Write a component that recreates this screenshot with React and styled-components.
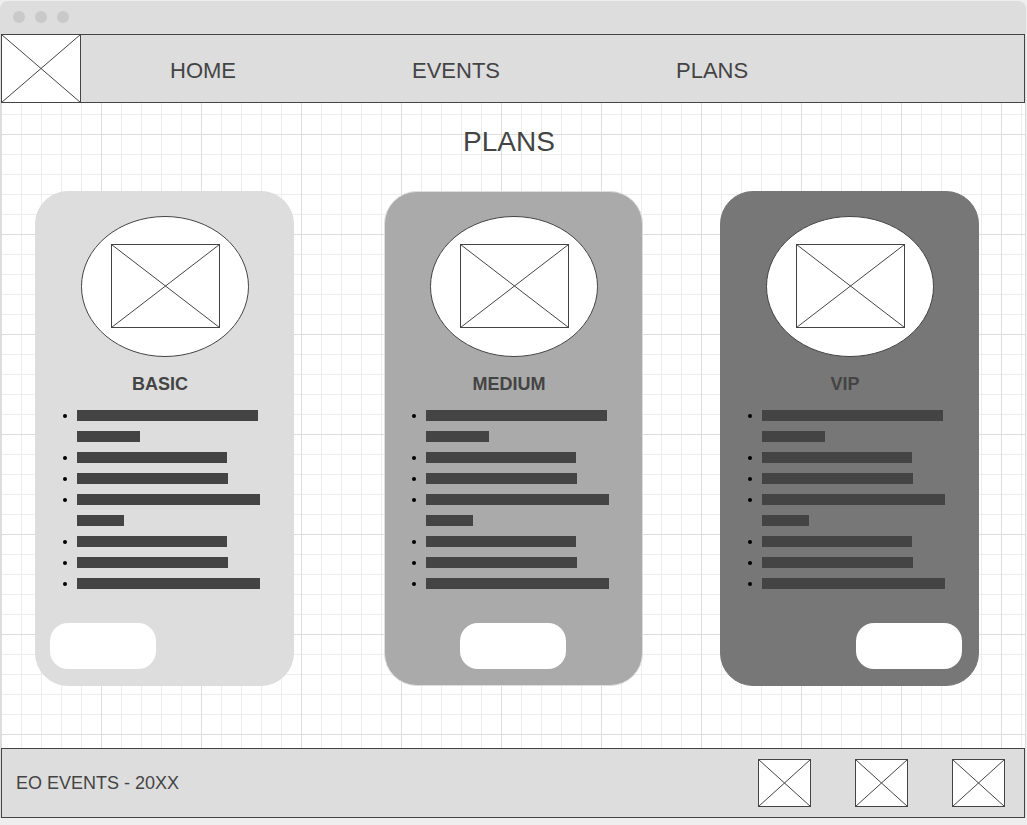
import React from "react";
import styled, { createGlobalStyle } from "styled-components";

const ink = "#444";
const panel = "#ddd";

const GlobalStyle = createGlobalStyle`
  *, *::before, *::after { box-sizing: border-box; }
  body {
    margin: 0;
    background: #eee;
    color: ${ink};
    font-family: "Liberation Sans", Arial, sans-serif;
  }
`;

const Window = styled.div`
  margin: 1px 1px 0 0;
  border: solid ${panel};
  border-width: 0 1px;
  border-radius: 8px 8px 0 0;
  background: ${panel};
`;

const TitleBar = styled.div`
  display: flex;
  gap: 10px;
  height: 33px;
  padding: 10px 12px;
`;

const Dot = styled.span`
  width: 12px;
  height: 12px;
  border-radius: 50%;
  background: #c9c9c9;
`;

const Canvas = styled.div`
  background-color: #fff;
  background-image:
    linear-gradient(${panel} 1px, transparent 1px),
    linear-gradient(90deg, ${panel} 1px, transparent 1px),
    linear-gradient(#ededed 1px, transparent 1px),
    linear-gradient(90deg, #ededed 1px, transparent 1px);
  background-size: 100px 100px, 100px 100px, 20px 20px, 20px 20px;
`;

const Header = styled.header`
  display: flex;
  align-items: center;
  background: ${panel};
  outline: 1px solid ${ink};
  outline-offset: -1px;
`;

const Nav = styled.nav`
  display: flex;
  gap: 176px;
  padding: 5px 0 0 89px;
`;

const NavLink = styled.a`
  color: inherit;
  font-size: 22px;
  line-height: 24px;
  text-decoration: none;
`;

const Drawing = styled.svg`
  display: block;
  flex: none;
  fill: #fff;
  stroke: ${ink};
  stroke-width: 1;
`;

const Main = styled.main`
  padding: 23px 0 62px;
`;

const Heading = styled.h1`
  margin: 0 0 33px;
  padding-right: 8px;
  font-size: 28px;
  font-weight: 400;
  line-height: 32px;
  text-align: center;
`;

const Plans = styled.div`
  display: grid;
  grid-template-columns: 349fr 336fr 259fr;
  margin: 0 46px 0 34px;
`;

const Card = styled.section`
  display: flex;
  flex-direction: column;
  width: 259px;
  padding: 24px 16px 16px 14px;
  border: 1px solid ${(p) => p.$edge};
  border-radius: 33px;
  background: ${(p) => p.$tone};
`;

const Portrait = styled.div`
  display: flex;
  padding-left: 31px;
`;

const PlanName = styled.h2`
  margin: 17px 0 11px;
  padding-right: 7px;
  font-size: 18px;
  font-weight: 700;
  line-height: 20px;
  text-align: center;
`;

const Features = styled.ul`
  margin: 0 0 29px;
  padding: 0 0 0 13px;
  list-style: none;
`;

const Feature = styled.li`
  display: flex;
  gap: 10px;

  &::before {
    content: "";
    width: 4px;
    height: 4px;
    margin-top: 9px;
    border-radius: 50%;
    background: #000;
  }
`;

const Line = styled.span`
  display: block;
  width: ${(p) => p.$width}px;
  height: 11px;
  margin: 5px 0;
  background: ${ink};

  & + & { margin-top: 10px; }
`;

const PlanButton = styled.button`
  align-self: ${(p) => p.$align};
  width: 106px;
  height: 46px;
  padding: 0;
  border: 0;
  border-radius: 18px;
  background: #fff;
  cursor: pointer;
`;

const Footer = styled.footer`
  display: flex;
  align-items: center;
  justify-content: space-between;
  height: 70px;
  padding: 0 20px 0 15px;
  background: ${panel};
  outline: 1px solid ${ink};
  outline-offset: -1px;
`;

const FooterText = styled.p`
  margin: 0;
  font-size: 18px;
  line-height: 20px;
`;

const Socials = styled.div`
  display: flex;
  gap: 44px;
`;

const SocialLink = styled.a`
  display: block;
`;

function Crossed({ x = 0, y = 0, width, height }) {
  const l = x + 0.5;
  const t = y + 0.5;
  const r = x + width - 0.5;
  const b = y + height - 0.5;
  return (
    <>
      <rect x={l} y={t} width={width - 1} height={height - 1} />
      <path d={`M${l} ${t}L${r} ${b}M${r} ${t}L${l} ${b}`} />
    </>
  );
}

function Placeholder({ width, height }) {
  return (
    <Drawing width={width} height={height} aria-hidden="true">
      <Crossed width={width} height={height} />
    </Drawing>
  );
}

const features = [[181, 63], [150], [151], [183, 47], [150], [151], [183]];

const plans = [
  { name: "BASIC", tone: "#ddd", edge: "#ddd", align: "flex-start" },
  { name: "MEDIUM", tone: "#aaa", edge: "#ddd", align: "center" },
  { name: "VIP", tone: "#777", edge: "#777", align: "flex-end" },
];

function Plan({ name, tone, edge, align }) {
  return (
    <Card $tone={tone} $edge={edge}>
      <Portrait>
        <Drawing width="168" height="141" aria-hidden="true">
          <ellipse cx="84" cy="70.5" rx="83.5" ry="70" />
          <Crossed x={30} y={28} width={109} height={84} />
        </Drawing>
      </Portrait>
      <PlanName>{name}</PlanName>
      <Features>
        {features.map((lines, i) => (
          <Feature key={i}>
            <div>
              {lines.map((width, j) => (
                <Line key={j} $width={width} />
              ))}
            </div>
          </Feature>
        ))}
      </Features>
      <PlanButton type="button" $align={align} aria-label={`Choose ${name}`} />
    </Card>
  );
}

export default function App() {
  return (
    <>
      <GlobalStyle />
      <Window>
        <TitleBar>
          <Dot />
          <Dot />
          <Dot />
        </TitleBar>
        <Canvas>
          <Header>
            <Placeholder width={80} height={69} />
            <Nav>
              <NavLink href="#home">HOME</NavLink>
              <NavLink href="#events">EVENTS</NavLink>
              <NavLink href="#plans">PLANS</NavLink>
            </Nav>
          </Header>
          <Main id="plans">
            <Heading>PLANS</Heading>
            <Plans>
              {plans.map((plan) => (
                <Plan key={plan.name} {...plan} />
              ))}
            </Plans>
          </Main>
          <Footer>
            <FooterText>EO EVENTS - 20XX</FooterText>
            <Socials>
              {["one", "two", "three"].map((id) => (
                <SocialLink key={id} href={`#social-${id}`} aria-label={`Social link ${id}`}>
                  <Placeholder width={53} height={48} />
                </SocialLink>
              ))}
            </Socials>
          </Footer>
        </Canvas>
      </Window>
    </>
  );
}
